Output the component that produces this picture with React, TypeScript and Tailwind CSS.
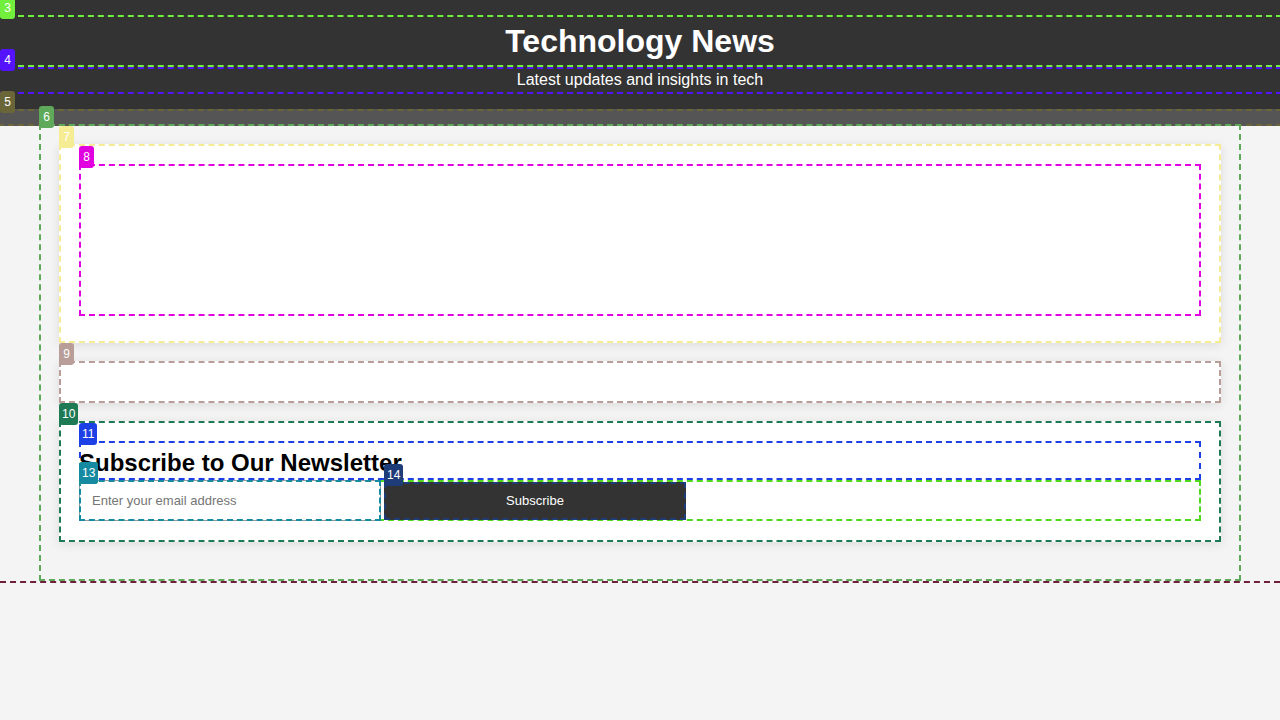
import type { ReactNode } from 'react';

type TagProps = {
  n: number;
  bg: string;
};

function Tag({ n, bg }: TagProps) {
  return (
    <span
      className={`absolute left-0 top-[-18px] z-20 h-[22px] min-w-[15px] rounded-[3px] px-[3px] text-center text-[12px] leading-[22px] text-white ${bg}`}
    >
      {n}
    </span>
  );
}

type BoxProps = {
  n: number;
  bg: string;
  line: string;
  className?: string;
  tagClass?: string;
  children?: ReactNode;
};

function Box({ n, bg, line, className = '', children }: BoxProps) {
  return (
    <div className={`relative outline-2 outline-dashed -outline-offset-2 ${line} ${className}`}>
      <Tag n={n} bg={bg} />
      {children}
    </div>
  );
}

// full-width rows: push the side edges of the outline out of view
function WideBox({ n, bg, line, className = '', children }: BoxProps) {
  return (
    <div className={`relative -mx-[2px] outline-2 outline-dashed -outline-offset-2 ${line} ${className}`}>
      <span
        className={`absolute left-[2px] top-[-18px] z-20 h-[22px] min-w-[15px] rounded-[3px] px-[3px] text-center text-[12px] leading-[22px] text-white ${bg}`}
      >
        {n}
      </span>
      {children}
    </div>
  );
}

export default function App() {
  return (
    <div className="min-h-[720px] overflow-hidden bg-[#f4f4f4] font-['Liberation_Sans',Arial,sans-serif]">
      <header className="bg-[#333333] py-[15px] text-center text-white">
        <WideBox n={3} bg="bg-[#72ef3c]" line="outline-[#72ef3c]" className="h-[52px]">
          <h1 className="text-[32px] font-bold leading-[52px]">Technology News</h1>
        </WideBox>
        <WideBox n={4} bg="bg-[#5412ff]" line="outline-[#5412ff]" className="h-[27px]">
          <p className="text-[16px] leading-[26px]">Latest updates and insights in tech</p>
        </WideBox>
      </header>

      <WideBox n={5} bg="bg-[#6b6638]" line="outline-[#6b6638]" className="h-[17px] bg-[#555555]" />

      <Box
        n={6}
        bg="bg-[#5ea95a]"
        line="outline-[#5ea95a]"
        className="z-10 mx-auto -mt-[2px] w-[1202px] px-[20px] pt-[20px] pb-[21px]"
      >
        <Box
          n={7}
          bg="bg-[#f5ec94]"
          line="outline-[#f5ec94]"
          className="mb-[18px] bg-white px-[20px] pt-[20px] pb-[27px] shadow-[0_2px_10px_rgba(0,0,0,0.1)]"
        >
          <Box n={8} bg="bg-[#e000e0]" line="outline-[#e000e0]" className="h-[152px]" />
        </Box>

        <Box
          n={9}
          bg="bg-[#b89d98]"
          line="outline-[#b89d98]"
          className="mb-[18px] h-[42px] bg-white shadow-[0_2px_10px_rgba(0,0,0,0.1)]"
        />

        <Box
          n={10}
          bg="bg-[#1e7a55]"
          line="outline-[#1e7a55]"
          className="mb-[18px] bg-white px-[20px] pt-[20px] pb-[21px] shadow-[0_2px_10px_rgba(0,0,0,0.1)]"
        >
          <Box n={11} bg="bg-[#1c3fe6]" line="outline-[#1c3fe6]" className="h-[39px]">
            <h2 className="text-[24px] font-bold leading-[43px] text-black">Subscribe to Our Newsletter</h2>
          </Box>
          <Box n={12} bg="bg-[#4fd81c]" line="outline-[#4fd81c]" className="flex h-[41px] items-center">
            <Box n={13} bg="bg-[#168aa0]" line="outline-[#168aa0]" className="h-[41px] w-[302px] shrink-0">
              <input
                type="email"
                placeholder="Enter your email address"
                className="h-full w-full border border-[#9a9a9a] bg-white px-[12px] text-[13px] text-black placeholder:text-[#757575] focus:outline-none"
              />
            </Box>
            <Box
              n={14}
              bg="bg-[#1e3d78]"
              line="outline-[#1e3d78]"
              className="ml-[3px] h-[38px] w-[302px] shrink-0"
            >
              <button className="h-full w-full bg-[#333333] text-[13px] text-white">Subscribe</button>
            </Box>
          </Box>
        </Box>
      </Box>

      <div className="h-[2px] border-t-2 border-dashed border-[#6e1f3c]" />
    </div>
  );
}
